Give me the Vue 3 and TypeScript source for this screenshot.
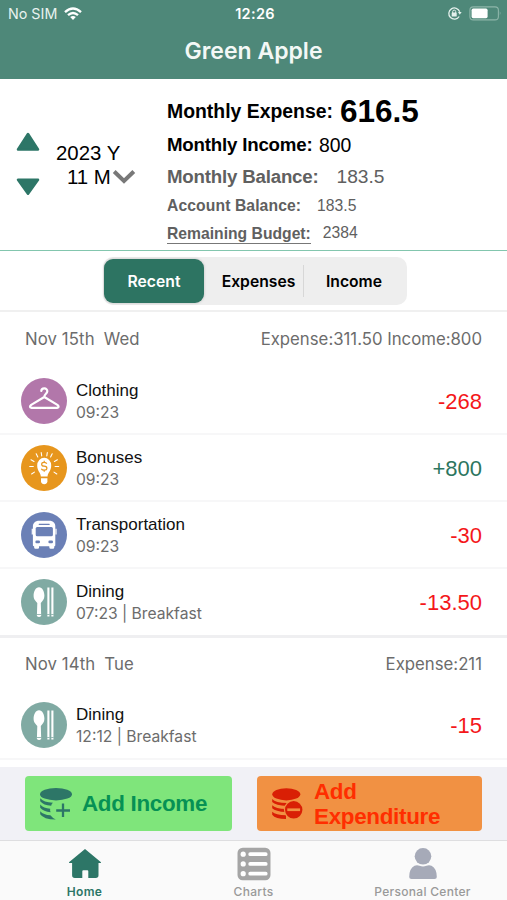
<script setup lang="ts">
import { ref } from 'vue'

type Kind = 'hanger' | 'bulb' | 'bus' | 'dining'
interface Entry { title: string; note: string; amount: string; kind: Kind; positive?: boolean }
interface Day { date: string; weekday: string; totals: string; entries: Entry[] }

const tabs = ['Recent', 'Expenses', 'Income']
const active = ref(0)

const days: Day[] = [
  {
    date: 'Nov 15th', weekday: 'Wed', totals: 'Expense:311.50 Income:800',
    entries: [
      { title: 'Clothing', note: '09:23', amount: '-268', kind: 'hanger' },
      { title: 'Bonuses', note: '09:23', amount: '+800', kind: 'bulb', positive: true },
      { title: 'Transportation', note: '09:23', amount: '-30', kind: 'bus' },
      { title: 'Dining', note: '07:23 | Breakfast', amount: '-13.50', kind: 'dining' },
    ],
  },
  {
    date: 'Nov 14th', weekday: 'Tue', totals: 'Expense:211',
    entries: [{ title: 'Dining', note: '12:12 | Breakfast', amount: '-15', kind: 'dining' }],
  },
]
</script>

<template>
  <div class="screen">
    <header class="top">
      <div class="status">
        <div class="carrier">
          <span>No SIM</span>
          <svg width="18" height="14" viewBox="0 0 18 14" fill="none" stroke="#fff" stroke-width="2.4">
            <path d="M1 5.2Q9-2 17 5.2" />
            <path d="M4 8.2Q9 3.8 14 8.2" />
            <path d="M9 13L6.2 10.1Q9 7.8 11.8 10.1Z" fill="#fff" stroke="none" />
          </svg>
        </div>
        <span class="clock">12:26</span>
        <div class="power">
          <svg width="15" height="15" viewBox="0 0 15 15" fill="none" stroke="#e4f0ec" stroke-width="1.3">
            <path d="M12.2 10.5A5.6 5.6 0 1 1 12.7 5.7" />
            <path d="M11 6h3.6l-1.8 2.7Z" fill="#e4f0ec" stroke="none" />
            <rect x="4.7" y="6.6" width="5" height="3.8" rx=".5" fill="#e4f0ec" stroke="none" />
            <path d="M5.7 7V5.6a1.5 1.5 0 0 1 3 0V7" stroke-width="1" />
          </svg>
          <svg width="33" height="15" viewBox="0 0 33 15">
            <rect x=".9" y=".9" width="28.5" height="13" rx="3.4" fill="none" stroke="#8db5a9" stroke-width="1.1" />
            <rect x="2.6" y="2.6" width="16" height="9.6" rx="1.6" fill="#fff" />
            <path d="M30.8 5.2q1.8 2.2 0 4.4Z" fill="#8db5a9" />
          </svg>
        </div>
      </div>
      <h1>Green Apple</h1>
    </header>

    <section class="summary">
      <div class="arrows">
        <svg width="24" height="20" viewBox="0 0 24 20"><path d="M12 2 22 17.5H2Z" /></svg>
        <svg width="24" height="18" viewBox="0 0 24 18"><path d="M2 1.8H22L12 15.8Z" /></svg>
      </div>
      <div class="period">
        <span class="year">2023 Y</span>
        <span class="month">11 M<svg width="24" height="16" viewBox="0 0 24 16"><path d="M2.2 2.5 12 12 21.8 2.5" fill="none" stroke="#787878" stroke-width="4" /></svg></span>
      </div>
      <div class="figures">
        <div class="line expense"><b>Monthly Expense:</b><strong>616.5</strong></div>
        <div class="line income"><b>Monthly Income:</b><span>800</span></div>
        <div class="line balance"><b>Monthly Balance:</b><span>183.5</span></div>
        <div class="line account"><b>Account Balance:</b><span>183.5</span></div>
        <div class="line budget"><b>Remaining Budget:</b><span>2384</span></div>
      </div>
    </section>

    <nav class="filter">
      <div class="segments">
        <button v-for="(t, i) in tabs" :key="t" :class="{ on: active === i }" @click="active = i">{{ t }}</button>
      </div>
    </nav>

    <main class="ledger">
      <section v-for="d in days" :key="d.date" class="day">
        <div class="day-head">
          <span class="date"><span>{{ d.date }}</span><span>{{ d.weekday }}</span></span>
          <span>{{ d.totals }}</span>
        </div>
        <div v-for="e in d.entries" :key="e.title" class="entry">
          <svg class="badge" :class="e.kind" width="46" height="46" viewBox="0 0 46 46">
            <circle cx="23" cy="23" r="23" />
            <g v-if="e.kind === 'hanger'" fill="none" stroke="#fff" stroke-width="2.2" stroke-linecap="round" stroke-linejoin="round">
              <path d="M20.3 13C20.5 9.4 26.5 9.6 26.3 13.4C26.2 15.8 23.3 15.9 23.3 19L10.2 26.9Q7.6 29.3 10.6 29.9H36Q39 29.3 36.4 26.9L23.3 19" />
            </g>
            <g v-else-if="e.kind === 'bulb'">
              <path d="M19.8 31.5C19.8 27.8 16.2 26.1 16.2 20.6A7 7.8 0 0 1 30.2 20.6C30.2 26.1 26.6 27.8 26.6 31.5Z" fill="#fff" />
              <path d="M20 33.3h6.4v3.2q-.5 2.7-3.2 2.7t-3.2-2.7Z" fill="#fff" />
              <g fill="none" stroke="#fff" stroke-width="1.1" stroke-linecap="round">
                <path d="M8.7 21.5h3.6M34.1 21.5h3.6M10 14.8l3 1.6M36.4 14.8l-3 1.6M15.2 8.8l1.6 3.2M31.2 8.8l-1.6 3.2M20.2 7.5l.5 3.4M26.3 7.5l-.5 3.4M10.6 29l2.8-1.9M35.8 29l-2.8-1.9" />
              </g>
              <path d="M25.8 18.6Q25 17.3 23.2 17.3C19.8 17.3 19.8 21 23.2 21.2C26.9 21.4 26.7 25.2 23.2 25.2Q21 25.2 20.3 23.7M23.2 15.8v1.5M23.2 25.2v1.6" fill="none" stroke="#e7961d" stroke-width="1.2" />
            </g>
            <g v-else-if="e.kind === 'bus'" fill="#fff">
              <path d="M16.8 8.8h12.8q4.7 1.2 4.7 5.2v19.2q0 1-1.2 1h-20q-1.2 0-1.2-1V14q0-4 4.9-5.2Z" />
              <rect x="13.2" y="33" width="4.8" height="3.8" rx="1.2" /><rect x="28.4" y="33" width="4.8" height="3.8" rx="1.2" />
              <path d="M11.3 16.7v5.8M35 16.7v5.8" stroke="#fff" stroke-width="1.2" />
              <rect x="14.7" y="15" width="17.2" height="9.2" rx="1.5" fill="#6b80b6" />
              <path d="M18.2 12.3h10" stroke="#6b80b6" stroke-width="1.2" stroke-linecap="round" />
              <rect x="14.4" y="28.6" width="4.6" height="2.6" rx="1.2" fill="#6b80b6" /><rect x="27.4" y="28.6" width="4.6" height="2.6" rx="1.2" fill="#6b80b6" />
            </g>
            <g v-else fill="#fff">
              <path d="M18 8.2C21.4 8.2 23.4 12.5 23.4 16.8C23.4 20.5 21.4 22 19.8 24L20.2 37Q18 39 15.9 37L16.3 24C14.7 22 12.6 20.5 12.6 16.8C12.6 12.5 14.6 8.2 18 8.2Z" />
              <path d="M27.4 8.6v29M31.4 8.6v29" stroke="#fff" stroke-width="2.1" />
              <path d="M16 35.5h4.3M26.1 35.5h2.6M30.1 35.5h2.6" stroke="#80aaa3" stroke-width=".8" />
            </g>
          </svg>
          <div class="labels"><span class="title">{{ e.title }}</span><span class="note">{{ e.note }}</span></div>
          <span class="amount" :class="{ plus: e.positive }">{{ e.amount }}</span>
        </div>
      </section>
    </main>

    <div class="actions">
      <button class="add-income">
        <svg width="34" height="34" viewBox="0 0 34 34">
          <ellipse cx="17" cy="7.2" rx="16" ry="6.2" fill="#2d7667" />
          <g fill="#2d7667">
            <path d="M1.2 11.2Q4.5 15.3 14 15.7Q12.4 16.8 12.2 18.7Q4.5 18.3 1.2 14.2Z" />
            <path d="M1.2 17.6Q4.5 21.4 11.2 21.8Q10.8 23.6 11.6 25.2Q4.5 24.4 1.2 20.7Z" />
            <path d="M1.2 24.2Q4.5 27.9 11.4 28.3Q13.2 30.8 16.8 32.6Q4.5 32.4 1.2 27.3Z" />
          </g>
          <path d="M24 16.5v13.5M17.2 23.5h13.8" stroke="#2d7667" stroke-width="2.3" />
        </svg>
        <span>Add Income</span>
      </button>
      <button class="add-expense">
        <svg width="34" height="34" viewBox="0 0 34 34">
          <ellipse cx="15.3" cy="7.3" rx="14" ry="6.1" fill="#d91f05" />
          <g fill="#d91f05">
            <path d="M1.2 12Q4.5 15.8 16 16V19Q4.5 18.5 1.2 15Z" />
            <path d="M1.2 18.2Q4.5 21.7 15 22V25Q4.5 24.5 1.2 21.2Z" />
            <path d="M1.2 24.7Q4.5 28 15 28.3V32Q4.5 32 1.2 27.7Z" />
          </g>
          <circle cx="22.7" cy="22.8" r="9.8" fill="#f19143" />
          <circle cx="22.7" cy="22.8" r="8.7" fill="#d91f05" />
          <rect x="16.3" y="21.4" width="12.8" height="2.7" fill="#f19143" />
        </svg>
        <span>Add<br>Expenditure</span>
      </button>
    </div>

    <footer class="tabs">
      <div class="tab home">
        <svg width="34" height="32" viewBox="0 0 34 32"><path d="M17 1 33 14.2Q33.2 15.1 32 15.1H30.5V27.3Q30.5 30 27.8 30H20.3V23.2q0-1-1-1h-4q-1 0-1 1V30H6.8Q4.1 30 4.1 27.3V15.1H2Q.8 15.1 1 14.2Z" fill="#2d7667" /></svg>
        <span>Home</span>
      </div>
      <div class="tab charts">
        <svg width="34" height="34" viewBox="0 0 34 34">
          <rect x=".5" y=".7" width="33" height="32.5" rx="5.2" fill="#a5a5a5" />
          <g fill="#fff"><circle cx="6.2" cy="7.2" r="2.6" /><circle cx="6.2" cy="16.9" r="2.6" /><circle cx="6.2" cy="26.7" r="2.6" /></g>
          <path d="M13.2 7.2h15.5M13.2 16.9h15.5M13.2 26.7h15.5" stroke="#fff" stroke-width="3.8" stroke-linecap="round" />
        </svg>
        <span>Charts</span>
      </div>
      <div class="tab person">
        <svg width="30" height="34" viewBox="0 0 30 34" fill="#a6aab8"><circle cx="15" cy="9.3" r="8.3" /><path d="M6.5 18.8Q9 17.8 11.5 18.8Q15 20 18.5 18.8Q21 17.8 23.5 18.8Q28.8 21.5 28.8 30Q28.8 32 26.5 32H3.5Q1.2 32 1.2 30Q1.2 21.5 6.5 18.8Z" /></svg>
        <span>Personal Center</span>
      </div>
    </footer>
  </div>
</template>

<style>
body { margin: 0; background: #fff; }
</style>

<style scoped>
* { box-sizing: border-box; }
svg { display: block; flex: none; }
button { border: 0; margin: 0; padding: 0; font: inherit; color: inherit; background: none; }
.screen { width: 507px; height: 900px; overflow: hidden; display: flex; flex-direction: column; background: #fff; font-family: Inter, sans-serif; white-space: nowrap; }
.top { height: 79px; background: #4e8879; color: #fff; }
.status { height: 27px; padding: 0 5px 0 8px; display: grid; grid-template-columns: 1fr auto 1fr; align-items: center; font-size: 14.3px; }
.carrier { display: flex; align-items: center; gap: 7px; color: #e8f2ef; }
.clock { font-weight: 600; font-size: 14.5px; letter-spacing: .3px; }
.power { display: flex; justify-content: flex-end; align-items: center; gap: 7px; }
h1 { margin: 8px 0 0; font-size: 23px; line-height: 32px; font-weight: 600; text-align: center; color: #f3f8f6; }

.summary { height: 172px; display: flex; border-bottom: 1px solid #83c6ae; font-family: "Liberation Sans", sans-serif; }
.arrows { width: 40px; margin-left: 16px; padding-top: 52.5px; display: flex; flex-direction: column; gap: 26px; }
.arrows svg { fill: #2d7667; stroke: #2d7667; stroke-width: 2.5; stroke-linejoin: round; }
.period { width: 111px; padding-top: 62px; display: flex; flex-direction: column; font-size: 20.4px; line-height: 24px; }
.month { display: flex; align-items: center; padding-left: 11px; gap: 1px; }
.figures { display: flex; flex-direction: column; }
.line { display: flex; align-items: center; color: #606060; }
.expense, .income { color: #000; font-size: 19.4px; }
.expense { height: 34px; margin-top: 15px; gap: 7px; }
.expense strong { font-size: 31.5px; }
.income { height: 34px; gap: 6.5px; }
.income b { font-size: 18.7px; letter-spacing: -.2px; }
.balance { height: 29px; font-size: 19.2px; gap: 18px; }
.balance b { font-size: 18.7px; letter-spacing: -.2px; }
.account { height: 28px; font-size: 15.7px; gap: 16px; padding-top: 1px; }
.account b { letter-spacing: .1px; }
.budget { height: 28px; font-size: 15.7px; gap: 12px; }
.budget b { border-bottom: 1.5px solid #777; margin-top: 2px; }

.filter { height: 61px; border-bottom: 2px solid #f0f0f0; display: flex; justify-content: center; padding: 6px 0 0 3px; }
.segments { width: 304px; height: 48px; padding: 2px 1px; display: grid; grid-template-columns: 100px 100px 102px; border-radius: 10px; background: #eee; font-size: 15.7px; font-weight: 600; }
.segments button { border-radius: 9px; }
.segments button:last-child { padding-right: 2px; }
.segments .on { background: #2d7462; color: #fff; box-shadow: 0 0 3px #0003; }
.segments button:nth-child(2) { border-radius: 0; border-right: 1px solid #d7d7d7; height: 32px; margin-top: 6px; padding-left: 10px; }

.day-head { height: 56px; padding: 0 25px 2px; display: flex; align-items: center; justify-content: space-between; font-size: 16.75px; color: #6c6c6c; }
.date { display: flex; gap: 9px; letter-spacing: .1px; }
.entry { height: 67.1px; display: flex; align-items: center; padding: 0 25px 0 21px; border-bottom: 2px solid #f7f7f8; }
.day:last-child .day-head { height: 55px; }
.day:first-child .entry:last-child { height: 68.4px; border-bottom: 3px solid #efeff1; }
.hanger circle:first-child { fill: #b277aa; }
.bulb circle:first-child { fill: #e7961d; }
.bus circle:first-child { fill: #6b80b6; }
.dining circle:first-child { fill: #80aaa3; }
.labels { margin-left: 9px; padding-top: 2px; flex: 1; display: flex; flex-direction: column; line-height: 22px; }
.title { font: 17px/22px "Liberation Sans", sans-serif; color: #111; }
.note { font-size: 15.65px; color: #6c6c6c; }
.amount { font-size: 22px; padding-top: 2px; font-family: "Liberation Sans", sans-serif; color: #f4171a; }
.amount.plus { color: #2d765f; }
.ledger { height: 455px; flex: none; overflow: hidden; }

.actions { flex: none; height: 73px; background: #f1f1f6; padding: 9px 25px; display: flex; gap: 25px; font: bold 22.4px/25px "Liberation Sans", sans-serif; letter-spacing: -.3px; }
.actions button { height: 55px; border-radius: 4px; display: flex; align-items: center; text-align: left; letter-spacing: inherit; }
.add-income { width: 207px; padding-left: 14px !important; gap: 9px; background: #7fe57b; color: #069154; }
.add-expense { width: 225px; padding-left: 14px !important; gap: 9px; background: #f19143; color: #ff2e00; }

.tabs { flex: none; height: 60px; background: #fafafa; border-top: 1px solid #dedee0; display: grid; grid-template-columns: repeat(3, 1fr); font-size: 12px; font-weight: 500; color: #999; letter-spacing: .3px; }
.tab { display: flex; flex-direction: column; align-items: center; padding-top: 6px; }
.tab svg { height: 34px; }
.tab span { line-height: 15px; margin-top: 3px; }
.home { color: #2d7667; font-weight: 600; }
</style>
